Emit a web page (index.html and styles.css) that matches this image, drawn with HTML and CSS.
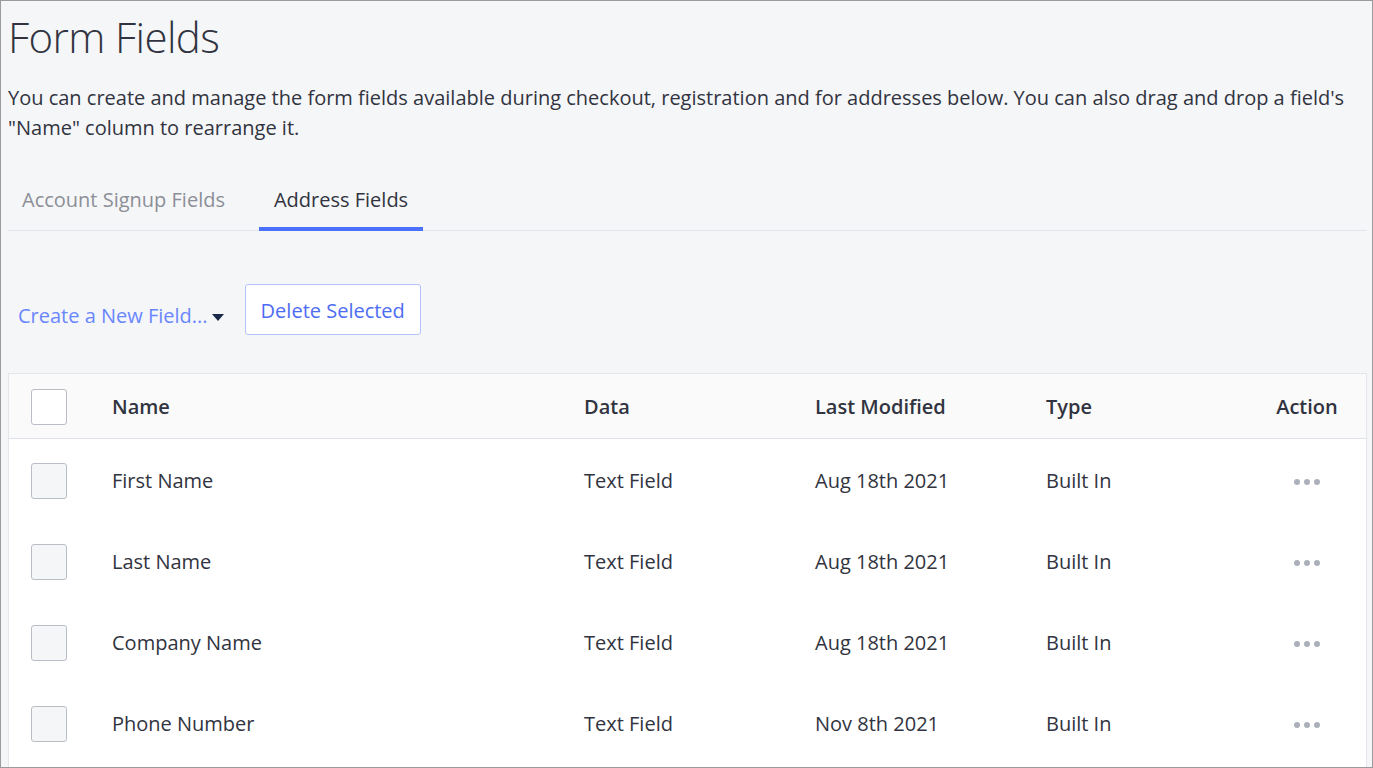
FILE: index.html
```html
<!DOCTYPE html>
<html lang="en">
<head>
<meta charset="utf-8">
<title>Form Fields</title>
<link rel="stylesheet" href="styles.css">
</head>
<body>
<div class="page">
  <h1 class="title">Form Fields</h1>
  <p class="intro">You can create and manage the form fields available during checkout, registration and for addresses below. You can also drag and drop a field's "Name" column to rearrange it.</p>

  <nav class="tabs">
    <a class="tab">Account Signup Fields</a>
    <a class="tab tab-active">Address Fields</a>
  </nav>

  <div class="actions">
    <a class="create-link">Create a New Field...<span class="caret"></span></a>
    <button class="btn-outline">Delete Selected</button>
  </div>

  <div class="table">
    <div class="row row-head">
      <div class="cell"><span class="check check-white"></span></div>
      <div class="cell">Name</div>
      <div class="cell">Data</div>
      <div class="cell">Last Modified</div>
      <div class="cell">Type</div>
      <div class="cell cell-action">Action</div>
    </div>
    <div class="row">
      <div class="cell"><span class="check"></span></div>
      <div class="cell">First Name</div>
      <div class="cell">Text Field</div>
      <div class="cell">Aug 18th 2021</div>
      <div class="cell">Built In</div>
      <div class="cell cell-action"><svg class="dots" width="26" height="6" viewBox="0 0 26 6"><circle cx="3" cy="3" r="3"/><circle cx="13" cy="3" r="3"/><circle cx="23" cy="3" r="3"/></svg></div>
    </div>
    <div class="row">
      <div class="cell"><span class="check"></span></div>
      <div class="cell">Last Name</div>
      <div class="cell">Text Field</div>
      <div class="cell">Aug 18th 2021</div>
      <div class="cell">Built In</div>
      <div class="cell cell-action"><svg class="dots" width="26" height="6" viewBox="0 0 26 6"><circle cx="3" cy="3" r="3"/><circle cx="13" cy="3" r="3"/><circle cx="23" cy="3" r="3"/></svg></div>
    </div>
    <div class="row">
      <div class="cell"><span class="check"></span></div>
      <div class="cell">Company Name</div>
      <div class="cell">Text Field</div>
      <div class="cell">Aug 18th 2021</div>
      <div class="cell">Built In</div>
      <div class="cell cell-action"><svg class="dots" width="26" height="6" viewBox="0 0 26 6"><circle cx="3" cy="3" r="3"/><circle cx="13" cy="3" r="3"/><circle cx="23" cy="3" r="3"/></svg></div>
    </div>
    <div class="row">
      <div class="cell"><span class="check"></span></div>
      <div class="cell">Phone Number</div>
      <div class="cell">Text Field</div>
      <div class="cell">Nov 8th 2021</div>
      <div class="cell">Built In</div>
      <div class="cell cell-action"><svg class="dots" width="26" height="6" viewBox="0 0 26 6"><circle cx="3" cy="3" r="3"/><circle cx="13" cy="3" r="3"/><circle cx="23" cy="3" r="3"/></svg></div>
    </div>
  </div>
</div>
</body>
</html>
```

FILE: styles.css
```css
* { box-sizing: border-box; }

html, body {
  margin: 0;
  padding: 0;
}

body {
  width: 1373px;
  height: 768px;
  overflow: hidden;
  background: #f5f6f8;
  border: 1px solid #9b9b9b;
  font-family: "Open Sans", Lato, "Liberation Sans", sans-serif;
  color: #313440;
}

.page {
  padding: 0 5px 0 7px;
}

.title {
  margin: 8px 0 0;
  font-size: 42px;
  line-height: 56px;
  font-weight: 300;
  letter-spacing: -0.6px;
  color: #313440;
}

.intro {
  margin: 18px 0 0;
  font-size: 20px;
  line-height: 30px;
}

.tabs {
  display: flex;
  gap: 19px;
  margin-top: 42px;
  border-bottom: 1px solid #e1e4ea;
}

.tab {
  display: block;
  padding: 0 15px 12px;
  font-size: 20px;
  line-height: 30px;
  color: #8c8f97;
  border-bottom: 4px solid transparent;
  margin-bottom: -1px;
}

.tabs .tab:first-child {
  margin-left: -1px;
}

.tab-active {
  color: #313440;
  border-bottom-color: #4b71fc;
}

.actions {
  display: flex;
  align-items: center;
  gap: 21px;
  margin-top: 53px;
  padding-left: 10px;
}

.create-link {
  display: flex;
  align-items: center;
  font-size: 20px;
  line-height: 30px;
  color: #6a86ff;
  margin-top: 12px;
}

.caret {
  width: 0;
  height: 0;
  margin-left: 4px;
  margin-top: 3px;
  border-left: 6px solid transparent;
  border-right: 6px solid transparent;
  border-top: 7px solid #1b2a4a;
}

.btn-outline {
  height: 51px;
  padding: 2px 15px 0;
  background: #ffffff;
  border: 1px solid #b4c1ff;
  border-radius: 3px;
  font-family: inherit;
  font-size: 20px;
  color: #4d6cf4;
}

.table {
  margin-top: 38px;
  padding-bottom: 30px;
  background: #ffffff;
  border: 1px solid #e3e6eb;
}

.row {
  display: grid;
  grid-template-columns: 81px 472px 231px 231px 1fr 62px;
  align-items: center;
  height: 81px;
  padding: 3px 28px 0 22px;
  font-size: 20px;
  line-height: 30px;
}

.row-head {
  height: 65px;
  padding-top: 2px;
  background: #fafafa;
  border-bottom: 1px solid #dfe3e9;
  font-weight: 600;
}

.cell {
  white-space: nowrap;
}

.cell-action {
  display: flex;
  justify-content: center;
}

.check {
  display: block;
  width: 36px;
  height: 36px;
  background: #f5f6f8;
  border: 1px solid #b9bdc6;
  border-radius: 3px;
}

.check-white {
  background: #ffffff;
}

.dots {
  display: block;
  fill: #abb0ba;
  margin-top: 2px;
}
```
